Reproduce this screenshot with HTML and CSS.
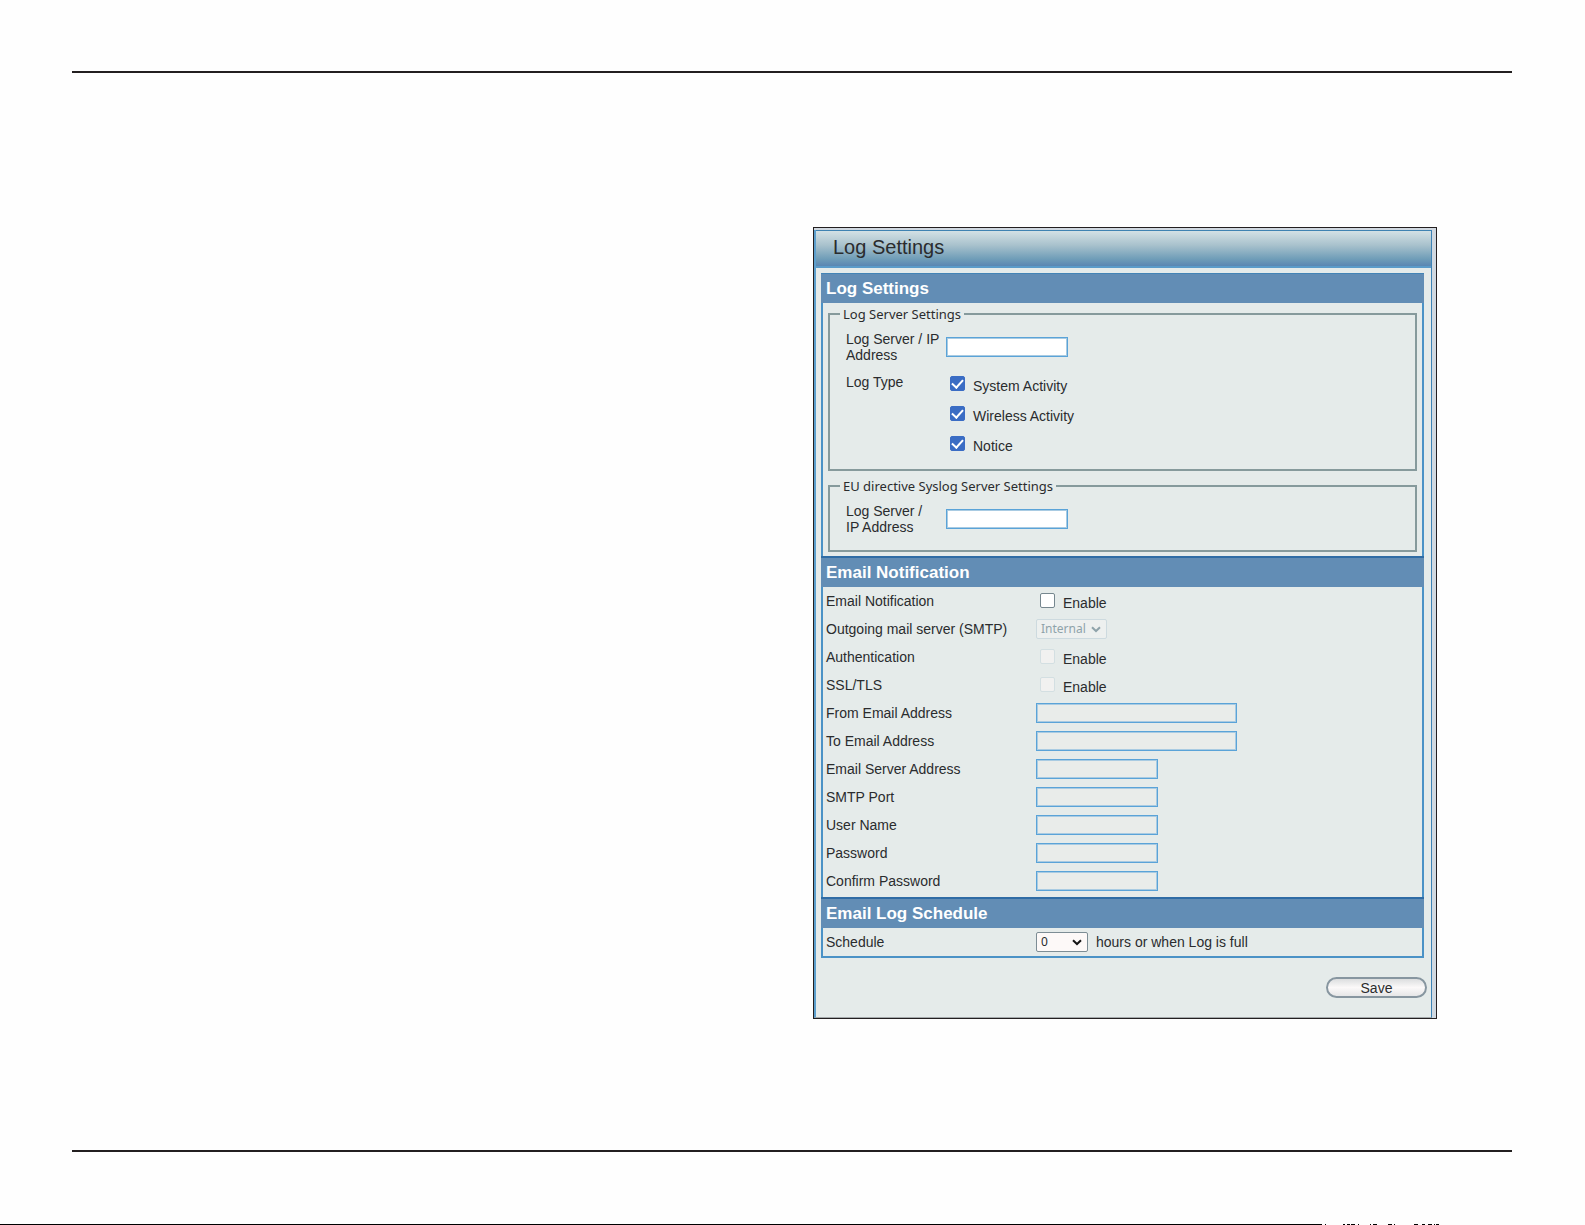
FILE: index.html
```html
<!DOCTYPE html>
<html lang="en">
<head>
<meta charset="utf-8">
<title>Log Settings</title>
<link rel="stylesheet" href="styles.css">
</head>
<body>
<div class="page">
  <main class="content">
    <form class="panel">
      <div class="panel-inner">
        <h1 class="title">Log Settings</h1>
        <div class="sections">
          <h2 class="section-head">Log Settings</h2>
          <div class="groups">
            <fieldset class="group">
              <legend>Log Server Settings</legend>
              <div class="group-grid">
                <label for="log-server">Log Server / IP<br>Address</label>
                <input class="field" id="log-server" type="text">
                <span>Log Type</span>
                <div class="checks">
                  <label class="check"><input type="checkbox" checked>System Activity</label>
                  <label class="check"><input type="checkbox" checked>Wireless Activity</label>
                  <label class="check"><input type="checkbox" checked>Notice</label>
                </div>
              </div>
            </fieldset>
            <fieldset class="group">
              <legend>EU directive Syslog Server Settings</legend>
              <div class="group-grid">
                <label for="eu-server">Log Server /<br>IP Address</label>
                <input class="field" id="eu-server" type="text">
              </div>
            </fieldset>
          </div>

          <h2 class="section-head">Email Notification</h2>
          <div class="rows">
            <div class="row"><span>Email Notification</span><label class="check"><input type="checkbox">Enable</label></div>
            <div class="row"><label for="smtp">Outgoing mail server (SMTP)</label>
              <span class="select select-wide"><select id="smtp" disabled><option>Internal</option></select><svg viewBox="0 0 10 7"><path d="M1 1.2 5 5 9 1.2"/></svg></span></div>
            <div class="row"><span>Authentication</span><label class="check"><input type="checkbox" disabled>Enable</label></div>
            <div class="row"><span>SSL/TLS</span><label class="check"><input type="checkbox" disabled>Enable</label></div>
            <div class="row"><label for="from">From Email Address</label><input class="field field-wide" id="from" type="text" disabled></div>
            <div class="row"><label for="to">To Email Address</label><input class="field field-wide" id="to" type="text" disabled></div>
            <div class="row"><label for="server">Email Server Address</label><input class="field" id="server" type="text" disabled></div>
            <div class="row"><label for="port">SMTP Port</label><input class="field" id="port" type="text" disabled></div>
            <div class="row"><label for="user">User Name</label><input class="field" id="user" type="text" disabled></div>
            <div class="row"><label for="pass">Password</label><input class="field" id="pass" type="password" disabled></div>
            <div class="row"><label for="confirm">Confirm Password</label><input class="field" id="confirm" type="password" disabled></div>
          </div>

          <h2 class="section-head">Email Log Schedule</h2>
          <div class="row"><label for="schedule">Schedule</label>
            <span class="schedule"><span class="select"><select id="schedule"><option>0</option></select><svg viewBox="0 0 10 7"><path d="M1 1.2 5 5 9 1.2"/></svg></span>hours or when Log is full</span></div>
        </div>
        <div class="actions"><button class="save" type="button">Save</button></div>
      </div>
    </form>
  </main>
  <div class="edge">
    <span class="edge-line"></span>
    <svg class="edge-marks" viewBox="0 0 120 1" shape-rendering="crispEdges"><path stroke="#000" d="M3 .5h1M21 .5h2M25 .5h3M29 .5h4M36 .5h1M48 .5h1M51 .5h4M66 .5h4M72 .5h1M92 .5h4M100 .5h3M106 .5h4M112 .5h1M114 .5h3M120 .5h1"/></svg>
  </div>
</div>
</body>
</html>
```
FILE: styles.css
```css
* { box-sizing: border-box; }

body {
  margin: 0;
  background: #fefefe;
  color: #2a2c2e;
  font: 14px/16px "Liberation Sans", Arial, sans-serif;
}

.page {
  min-height: 100vh;
  display: flex;
  flex-direction: column;
  padding-top: 71px;
}

.content {
  flex: 1;
  margin: 0 73px 72px 72px;
  padding: 154px 0 64px;
  border-top: 2px solid #231f20;
  border-bottom: 2px solid #231f20;
  display: grid;
  grid-template-columns: 741fr 624fr 75fr;
  align-items: start;
}

.panel {
  grid-column: 2;
  min-width: 0;
  border: 1px solid #231f20;
  padding: 2px 4px 0 0;
  background: #d0d8e0;
}

.panel-inner {
  border-left: 2px solid #5c9fcd;
  border-right: 1px solid #3c82b6;
  border-bottom: 1px solid #a4a9ab;
  background: #e5ebea;
  padding-bottom: 19px;
}

.title {
  margin: 0;
  padding: 0 17px;
  height: 38px;
  border-top: 1px solid #3f83b2;
  border-bottom: 2px solid #5b9bc9;
  background: linear-gradient(#d3e1e5, #a9c2cd 40%, #6f9db8 80%, #5a86b2);
  font-size: 20px;
  font-weight: 400;
  line-height: 33px;
}

.sections {
  margin: 5px 7px 0 5px;
  border: solid #4b92c6;
  border-width: 0 2px 2px;
}

.section-head {
  margin: 0 -2px;
  padding: 0 5px;
  border-top: 2px solid #2f6ca5;
  background: #628db5;
  color: #fff;
  font-size: 17px;
  line-height: 29px;
}

.section-head:first-child {
  border-top: 1px solid #4384b6;
}

.groups {
  padding: 3px 5px 4px;
  display: grid;
  gap: 7px;
}

.group {
  margin: 0;
  min-width: 0;
  padding: 0 10px 15px;
  border: 2px solid #869a9c;
}

.group legend {
  padding: 0 3px;
  font-family: "Noto Sans", sans-serif;
  font-size: 13px;
}

.group-grid {
  display: grid;
  grid-template-columns: 100px 1fr;
  row-gap: 11px;
  padding: 9px 6px 0;
  align-items: start;
}

.group-grid .field { align-self: center; }

.checks {
  display: grid;
  gap: 10px;
}

.check {
  display: flex;
  align-items: flex-end;
  height: 20px;
}

.check input {
  appearance: none;
  flex: none;
  width: 15px;
  height: 15px;
  margin: 0 8px 3px 4px;
  border: 1px solid #76878f;
  border-radius: 2px;
  background: #fff;
  display: grid;
  place-items: center;
}

.check input:checked {
  border-color: #3a6cc4;
  background: #3a6cc4;
}

.check input:checked::before {
  content: "";
  width: 5px;
  height: 9px;
  margin-bottom: 2px;
  border: solid #fff;
  border-width: 0 2px 2px 0;
  transform: rotate(42deg);
}

.check input:disabled {
  border-color: #d3dfe2;
  background: #f1f1f0;
}

.rows { padding-bottom: 2px; }

.row {
  display: grid;
  grid-template-columns: 210px 1fr;
  align-items: center;
  height: 28px;
  padding-left: 3px;
}

.field {
  width: 122px;
  height: 20px;
  padding: 0 3px;
  border: 1px solid #5aa3d8;
  outline: 1px solid #a9cbe2;
  outline-offset: -2px;
  background: #fff;
  font: inherit;
}

.field:disabled { background: #e9ecea; }

.field-wide { width: 201px; }

.select {
  display: grid;
  width: 52px;
  height: 20px;
  align-items: center;
}

.select-wide { width: 71px; }

.select select {
  grid-area: 1 / 1;
  appearance: none;
  width: 100%;
  height: 20px;
  padding: 0 4px;
  border: 1px solid #7d8d95;
  border-radius: 2px;
  background: #fdf9f8;
  color: #2a2c2e;
  font: 12px/16px "Noto Sans", sans-serif;
}

.select svg {
  grid-area: 1 / 1;
  justify-self: end;
  width: 10px;
  height: 7px;
  margin-right: 6px;
  fill: none;
  stroke: #151515;
  stroke-width: 2;
  pointer-events: none;
}

.select select:disabled {
  border-color: #cddadf;
  background: #edf0ef;
  color: #8fa3aa;
  opacity: 1;
}

.select select:disabled + svg { stroke: #8fa3aa; }

.schedule {
  display: flex;
  align-items: center;
  gap: 8px;
}

.actions {
  display: flex;
  justify-content: flex-end;
  padding: 19px 4px 0 0;
}

.save {
  width: 101px;
  height: 21px;
  padding: 0;
  border: 2px solid #8796a0;
  border-radius: 11px;
  background: linear-gradient(#dcdedf, #fbf9f9 50%, #e6e6e7);
  color: #2a2c2e;
  font: inherit;
}

.edge {
  display: flex;
  align-items: flex-start;
  height: 1px;
}

.edge-line {
  width: 83.4%;
  height: 1px;
  background: #000;
}

.edge-marks {
  width: 120px;
  height: 1px;
}
```
